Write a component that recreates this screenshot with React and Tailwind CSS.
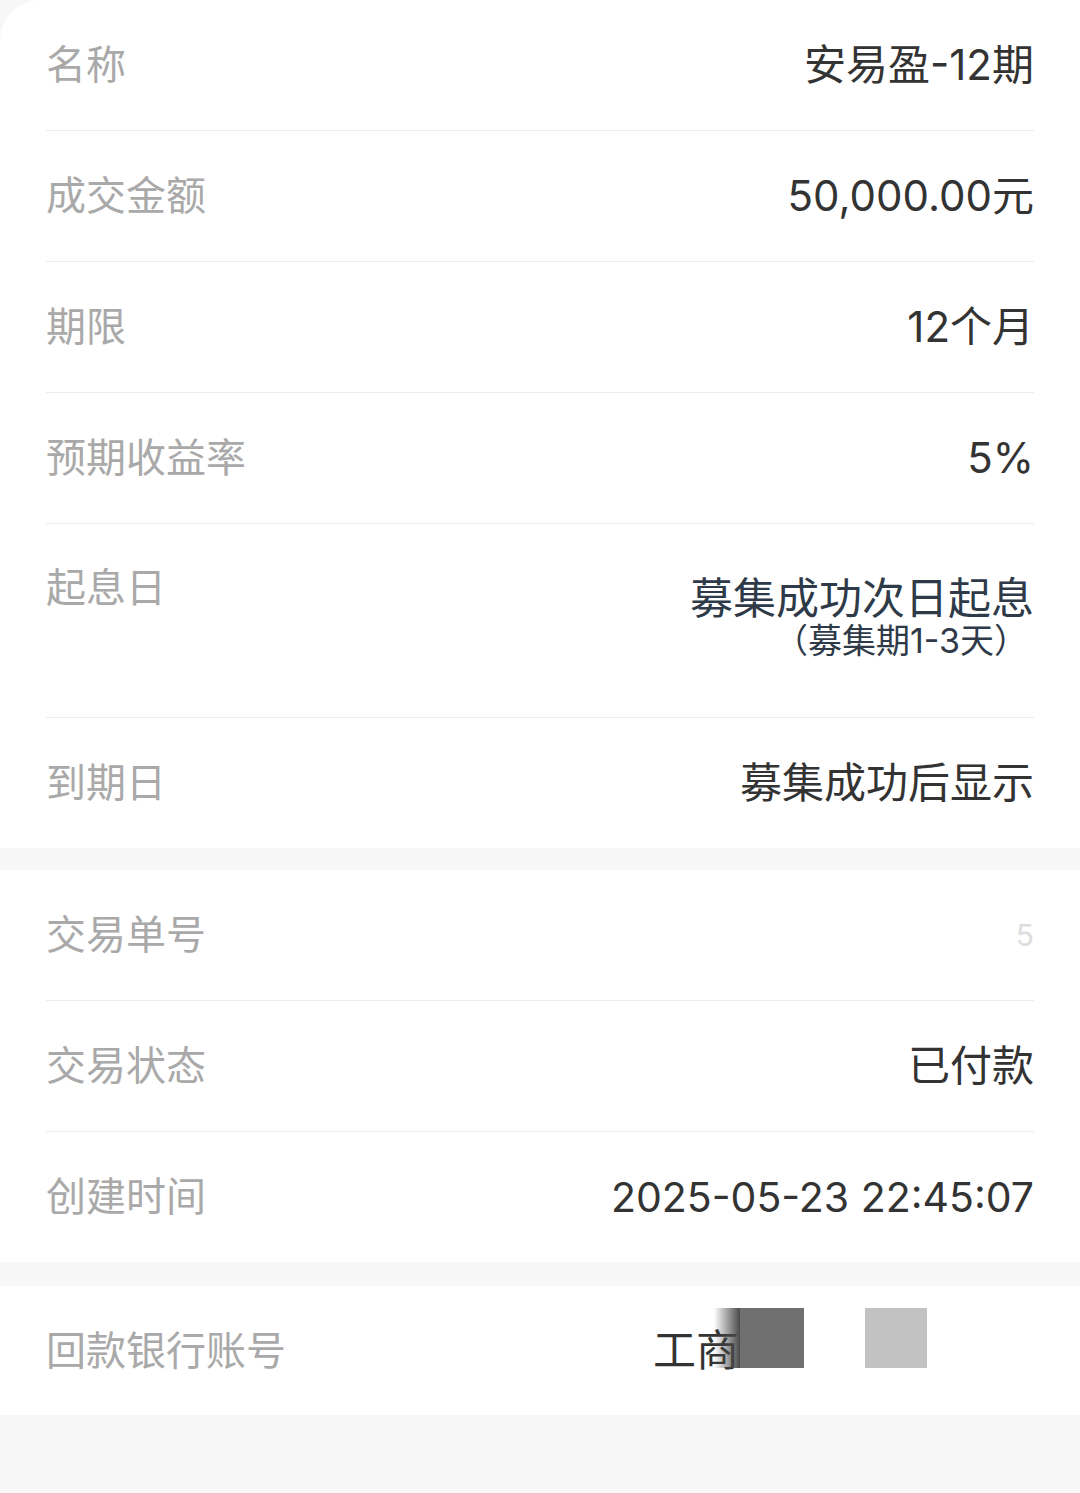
const font = { fontFamily: 'Inter, "Noto Sans CJK SC", sans-serif' };

const Row = ({ label, children, border = true, className = 'h-[131px] items-center' }) => (
    <div className={`flex justify-between ${className} ${border ? 'border-b border-[#ededed]' : ''}`}>
        <span className="text-[40px] leading-none text-[#a9a9a9]">{label}</span>
        {children}
    </div>
);

const Value = ({ children }) => (
    <span className="text-[42px] leading-none text-[#333333]">{children}</span>
);

export default function App() {
    return (
        <div className="min-h-[1493px] bg-[#f7f7f7]" style={font}>
            {/* product info */}
            <div className="bg-white px-[46px] rounded-tl-[40px]">
                <Row label="名称"><Value>安易盈-12期</Value></Row>
                <Row label="成交金额"><Value>50,000.00元</Value></Row>
                <Row label="期限"><Value>12个月</Value></Row>
                <Row label="预期收益率"><Value>5%</Value></Row>
                <Row label="起息日" className="h-[194px] items-start pt-[44px]">
                    <div className="flex flex-col items-end pt-[6px]">
                        <span className="text-[43px] leading-[48px] text-[#2e3a48]">募集成功次日起息</span>
                        <span className="text-[34px] leading-[38px] text-[#2e3a48] mr-[6px]">（募集期1-3天）</span>
                    </div>
                </Row>
                <Row label="到期日" border={false} className="h-[130px] items-center"><Value>募集成功后显示</Value></Row>
            </div>

            {/* trade info */}
            <div className="bg-white px-[46px] mt-[22px]">
                <Row label="交易单号">
                    <span className="text-[30px] leading-none text-[#dddddd]">5</span>
                </Row>
                <Row label="交易状态"><Value>已付款</Value></Row>
                <Row label="创建时间" border={false} className="h-[130px] items-center">
                    <span className="text-[41px] leading-none text-[#333333]">2025-05-23 22:45:07</span>
                </Row>
            </div>

            {/* bank */}
            <div className="bg-white px-[46px] mt-[24px]">
                <Row label="回款银行账号" border={false} className="h-[129px] items-center">
                    <div className="flex items-center mr-[107px]">
                        <span className="text-[43px] leading-none text-[#333333]">工商</span>
                        <span className="w-[26px] h-[60px] mb-[25px] -ml-[25px] bg-gradient-to-r from-white/0 to-[#4a4a4a]" />
                        <span className="w-[64px] h-[60px] mb-[25px] bg-[#707070]" />
                        <span className="w-[62px] h-[60px] mb-[25px] bg-[#c2c2c2] ml-[61px]" />
                    </div>
                </Row>
            </div>
        </div>
    );
}
